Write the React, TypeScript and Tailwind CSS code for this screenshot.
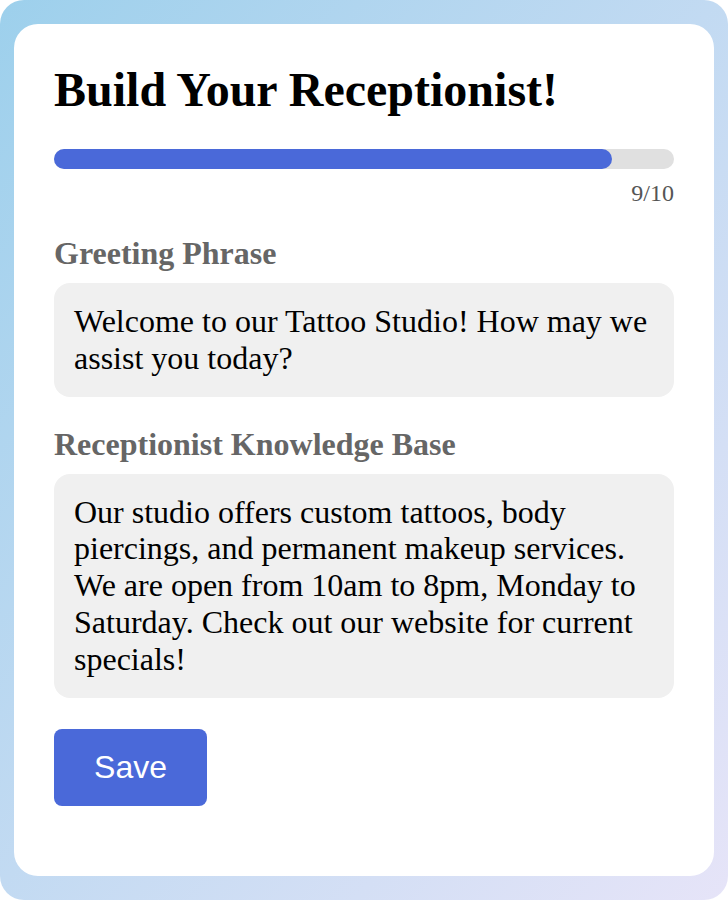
export default function App() {
  const step = 9;
  const total = 10;

  return (
    <div className="min-h-[900px] w-[728px] rounded-[24px] bg-gradient-to-br from-[#9dd0ec] to-[#e6e4f8] px-[14px] py-[24px]"
      style={{ fontFamily: "'Liberation Serif', 'Times New Roman', serif" }}>
      <div className="flex h-[852px] flex-col rounded-[24px] bg-white px-[40px] pt-[38px]">
        {/* Heading */}
        <h1 className="text-[48px] font-bold leading-[56px] text-black">Build Your Receptionist!</h1>

        {/* Progress */}
        <div className="mt-[31px] h-[20px] w-full rounded-full bg-[#e0e0e0]">
          <div className="h-full rounded-full bg-[#4a69d9]" style={{ width: `${(step / total) * 100}%` }} />
        </div>
        <p className="mt-[10px] text-right text-[24px] leading-[28px] text-[#555]">{step}/{total}</p>

        {/* Greeting */}
        <label className="mt-[28px] text-[32px] font-bold leading-[36px] text-[#666]">Greeting Phrase</label>
        <div className="mt-[12px] rounded-[16px] bg-[#f0f0f0] px-[20px] py-[20px] text-[32px] leading-[1.15] text-black">
          Welcome to our Tattoo Studio! How may we assist you today?
        </div>

        {/* Knowledge base */}
        <label className="mt-[29px] text-[32px] font-bold leading-[36px] text-[#666]">Receptionist Knowledge Base</label>
        <div className="mt-[12px] rounded-[16px] bg-[#f0f0f0] px-[20px] py-[20px] text-[32px] leading-[1.15] text-black">
          Our studio offers custom tattoos, body piercings, and permanent makeup services. We are open from 10am to 8pm, Monday to Saturday. Check out our website for current specials!
        </div>

        <div>
          <button className="mt-[31px] h-[77px] w-[153px] rounded-[8px] bg-[#4a69d9] text-[32px] text-white"
            style={{ fontFamily: "'Liberation Sans', Arial, sans-serif" }}>
            Save
          </button>
        </div>
      </div>
    </div>
  );
}
